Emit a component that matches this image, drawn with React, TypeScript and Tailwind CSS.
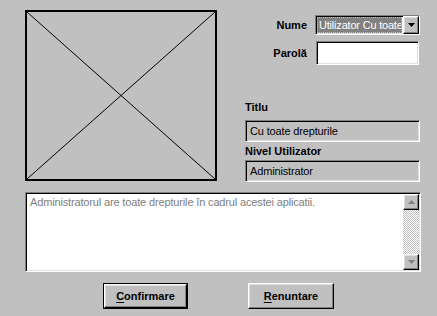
import React from 'react';

const sunken =
  'border border-t-[#808080] border-l-[#808080] border-b-white border-r-white shadow-[inset_1px_1px_0_#000,inset_-1px_-1px_0_#dfdfdf]';
const raised =
  'border border-t-white border-l-white border-b-black border-r-black shadow-[inset_-1px_-1px_0_#808080,inset_1px_1px_0_#dfdfdf]';

function Arrow({ up, color }: { up?: boolean; color: string }) {
  return (
    <svg width="7" height="4" viewBox="0 0 7 4">
      <polygon points={up ? '3.5,0 7,4 0,4' : '0,0 7,0 3.5,4'} fill={color} />
    </svg>
  );
}

export default function App() {
  return (
    <div className="w-[437px] h-[316px] bg-[#c0c0c0] text-[11px] leading-[13px] text-black overflow-hidden font-['Liberation_Sans',Arial,sans-serif]">
      {/* top part: picture + user fields */}
      <div className="flex pt-[10px] pl-[25px]">
        <div className="w-[192px] h-[171px] border-2 border-black">
          <svg className="w-full h-full block" viewBox="0 0 100 100" preserveAspectRatio="none">
            <line x1="0" y1="0" x2="100" y2="100" stroke="#000" strokeWidth="1" vectorEffect="non-scaling-stroke" />
            <line x1="100" y1="0" x2="0" y2="100" stroke="#000" strokeWidth="1" vectorEffect="non-scaling-stroke" />
          </svg>
        </div>

        <div className="ml-[28px] w-[176px] flex flex-col">
          <div className="flex items-center mt-[5px] h-[20px]">
            <span className="w-[62px] text-right font-bold">Nume</span>
            <div className={`ml-[8px] w-[105px] h-[20px] flex bg-white ${sunken}`}>
              <div className="flex-1 p-[1px] overflow-hidden">
                <div className="h-full bg-[#808080] text-white border border-dotted border-[#c0c0c0] pl-[1px] whitespace-nowrap overflow-hidden leading-[14px] tracking-[-0.2px]">
                  Utilizator Cu toate
                </div>
              </div>
              <div className={`w-[16px] h-full bg-[#c0c0c0] flex items-center justify-center ${raised}`}>
                <Arrow color="#000" />
              </div>
            </div>
          </div>

          <div className="flex items-center mt-[6px] h-[24px]">
            <span className="w-[62px] text-right font-bold">Parolă</span>
            <div className={`ml-[9px] w-[103px] h-[24px] bg-white ${sunken}`} />
          </div>

          <span className="mt-[36px] font-bold">Titlu</span>
          <div className={`mt-[6px] h-[22px] w-[175px] pl-[4px] flex items-center tracking-[-0.15px] ${sunken}`}>Cu toate drepturile</div>

          <span className="mt-[3px] font-bold">Nivel Utilizator</span>
          <div className={`mt-[2px] h-[22px] w-[175px] pl-[4px] flex items-center tracking-[-0.15px] ${sunken}`}>Administrator</div>
        </div>
      </div>

      {/* description */}
      <div className={`mt-[10px] ml-[25px] w-[396px] h-[80px] bg-white flex ${sunken}`}>
        <div className="flex-1 pl-[4px] pt-[3px] text-[#808080] whitespace-nowrap overflow-hidden tracking-[-0.15px]">
          Administratorul are toate drepturile în cadrul acestei aplicatii.
        </div>
        <div className="w-[16px] flex flex-col mt-[1px] mr-[1px] h-[76px]">
          <div className={`h-[16px] bg-[#c0c0c0] flex items-center justify-center ${raised}`}>
            <Arrow up color="#808080" />
          </div>
          <div className="flex-1 bg-[repeating-conic-gradient(#c0c0c0_0_25%,#ffffff_0_50%)] bg-[length:2px_2px]" />
          <div className={`h-[16px] bg-[#c0c0c0] flex items-center justify-center ${raised}`}>
            <Arrow color="#808080" />
          </div>
        </div>
      </div>

      {/* buttons */}
      <div className="flex mt-[11px]">
        <div className="ml-[103px] w-[85px] h-[26px] border border-black">
          <button className={`w-full h-full bg-[#c0c0c0] font-bold ${raised}`}>
            <span className="underline underline-offset-2">C</span>onfirmare
          </button>
        </div>
        <button className={`ml-[60px] w-[86px] h-[26px] bg-[#c0c0c0] font-bold ${raised}`}>
          <span className="underline underline-offset-2">R</span>enuntare
        </button>
      </div>
    </div>
  );
}
